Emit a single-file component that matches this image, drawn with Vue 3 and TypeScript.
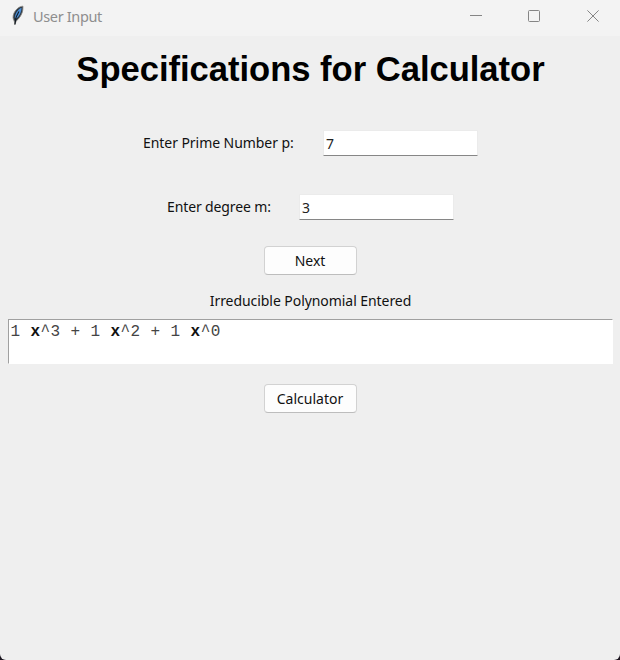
<script setup lang="ts">
import { ref } from 'vue'

const prime = ref('7')
const degree = ref('3')
const terms = [
  { coefficient: 1, power: 3 },
  { coefficient: 1, power: 2 },
  { coefficient: 1, power: 0 },
]
</script>

<template>
  <div class="desktop">
    <div class="window">
      <header class="titlebar">
        <svg class="feather" width="14" height="22" viewBox="0 0 14 22">
          <path d="M12 2.2C8.6 2.2 4.8 5 2.8 9.5 1.6 12.8 1.8 14.8 3.2 17L3.9 20.5 5.2 17C8.4 14.8 11.4 9.6 11.8 6Z" fill="#2c3742" stroke="#8a8781" stroke-width=".8" />
          <path d="M10.6 3.8C7.4 4.8 4.6 8.8 3.7 13.4L5.6 14.6C8.4 12 10.6 8 10.6 3.8Z" fill="#4b8fd8" />
          <path d="M7.9 7.5 5.2 13 3.9 20.5" fill="none" stroke="#121a22" stroke-width="1.1" />
        </svg>
        <span class="title">User Input</span>
        <div class="controls">
          <svg width="12" height="12" viewBox="0 0 12 12"><path d="M0 5.5H12" /></svg>
          <svg width="12" height="12" viewBox="0 0 12 12"><rect x=".5" y=".5" width="11" height="11" rx="1" /></svg>
          <svg width="12" height="12" viewBox="0 0 12 12"><path d="M.4.4 11.6 11.6M11.6.4.4 11.6" /></svg>
        </div>
      </header>

      <main>
        <h1>Specifications for Calculator</h1>
        <div class="row prime">
          <label class="text-prime" for="prime">Enter Prime Number p:</label>
          <input id="prime" v-model="prime" type="text" />
        </div>
        <div class="row degree">
          <label class="text-degree" for="degree">Enter degree m:</label>
          <input id="degree" v-model="degree" type="text" />
        </div>
        <button class="next" type="button">Next</button>
        <p class="caption">Irreducible Polynomial Entered</p>
        <div class="polynomial"><template v-for="(t, i) in terms" :key="i">{{ i ? ' + ' : '' }}{{ t.coefficient }} <b>x</b>^{{ t.power }}</template></div>
        <button class="calc" type="button">Calculator</button>
      </main>
    </div>
  </div>
</template>

<style>
body {
  margin: 0;
}
</style>

<style scoped>
* {
  box-sizing: border-box;
}
.desktop {
  width: 620px;
  height: 660px;
  background: #1c1620;
}
.window {
  height: 100%;
  overflow: hidden;
  border-radius: 0 0 6px 6px;
  background: #efefef;
  color: #111;
  font-family: 'Noto Sans', sans-serif;
  font-size: 14px;
  letter-spacing: -0.06px;
}
.titlebar {
  display: flex;
  align-items: center;
  height: 36px;
  padding: 0 21px 4px 11px;
  background: #f3f3f3;
}
.feather {
  margin-top: -3px;
}
.title {
  margin-left: 8px;
  color: #8e8e8e;
  font-size: 14.5px;
  line-height: 20px;
  letter-spacing: -0.35px;
  margin-top: -1px;
}
.controls {
  display: flex;
  margin-left: auto;
}
.controls svg {
  margin-left: 47px;
  fill: none;
  stroke: #858585;
  stroke-width: 1;
}
.controls svg:nth-child(2) {
  margin-left: 46px;
}
main {
  display: flex;
  flex-direction: column;
  align-items: center;
}
h1 {
  margin: 13px 0 0 1px;
  color: #000;
  font: bold 34.6px/40px 'Liberation Sans', sans-serif;
  letter-spacing: -0.02px;
  white-space: nowrap;
}
.row {
  display: flex;
  align-items: center;
  height: 26px;
  padding-left: 1px;
  white-space: nowrap;
}
.prime {
  margin-top: 41px;
}
.degree {
  margin-top: 38px;
}
label {
  margin-right: 28px;
  line-height: 20px;
}
.text-prime {
  width: 152px;
}
.text-degree {
  width: 104px;
  letter-spacing: -0.12px;
}
input {
  width: 155px;
  height: 26px;
  padding: 0 2px;
  border: 1px solid #ebebeb;
  border-bottom: 1px solid #868686;
  border-radius: 1px;
  outline: 0;
  background: #fff;
  color: #222;
  font: inherit;
}
button {
  width: 93px;
  height: 29px;
  padding: 0;
  border: 1px solid #d2d2d2;
  border-bottom-color: #bdbdbd;
  border-radius: 4px;
  background: #fdfdfd;
  color: #111;
  font: inherit;
  line-height: 20px;
}
.next {
  margin-top: 26px;
}
.caption {
  margin: 16px 0 0 1px;
  line-height: 20px;
}
.polynomial {
  width: 605px;
  height: 45px;
  margin-top: 8px;
  padding: 2px 2px;
  border: 1px solid #fff;
  border-top: 1px solid #a0a0a0;
  border-left-color: #a0a0a0;
  background: #fff;
  color: #444;
  font: 16px/20px 'Liberation Mono', monospace;
  letter-spacing: 0.4px;
  white-space: pre;
}
.polynomial b {
  color: #111;
}
.calc {
  margin-top: 20px;
}
</style>
